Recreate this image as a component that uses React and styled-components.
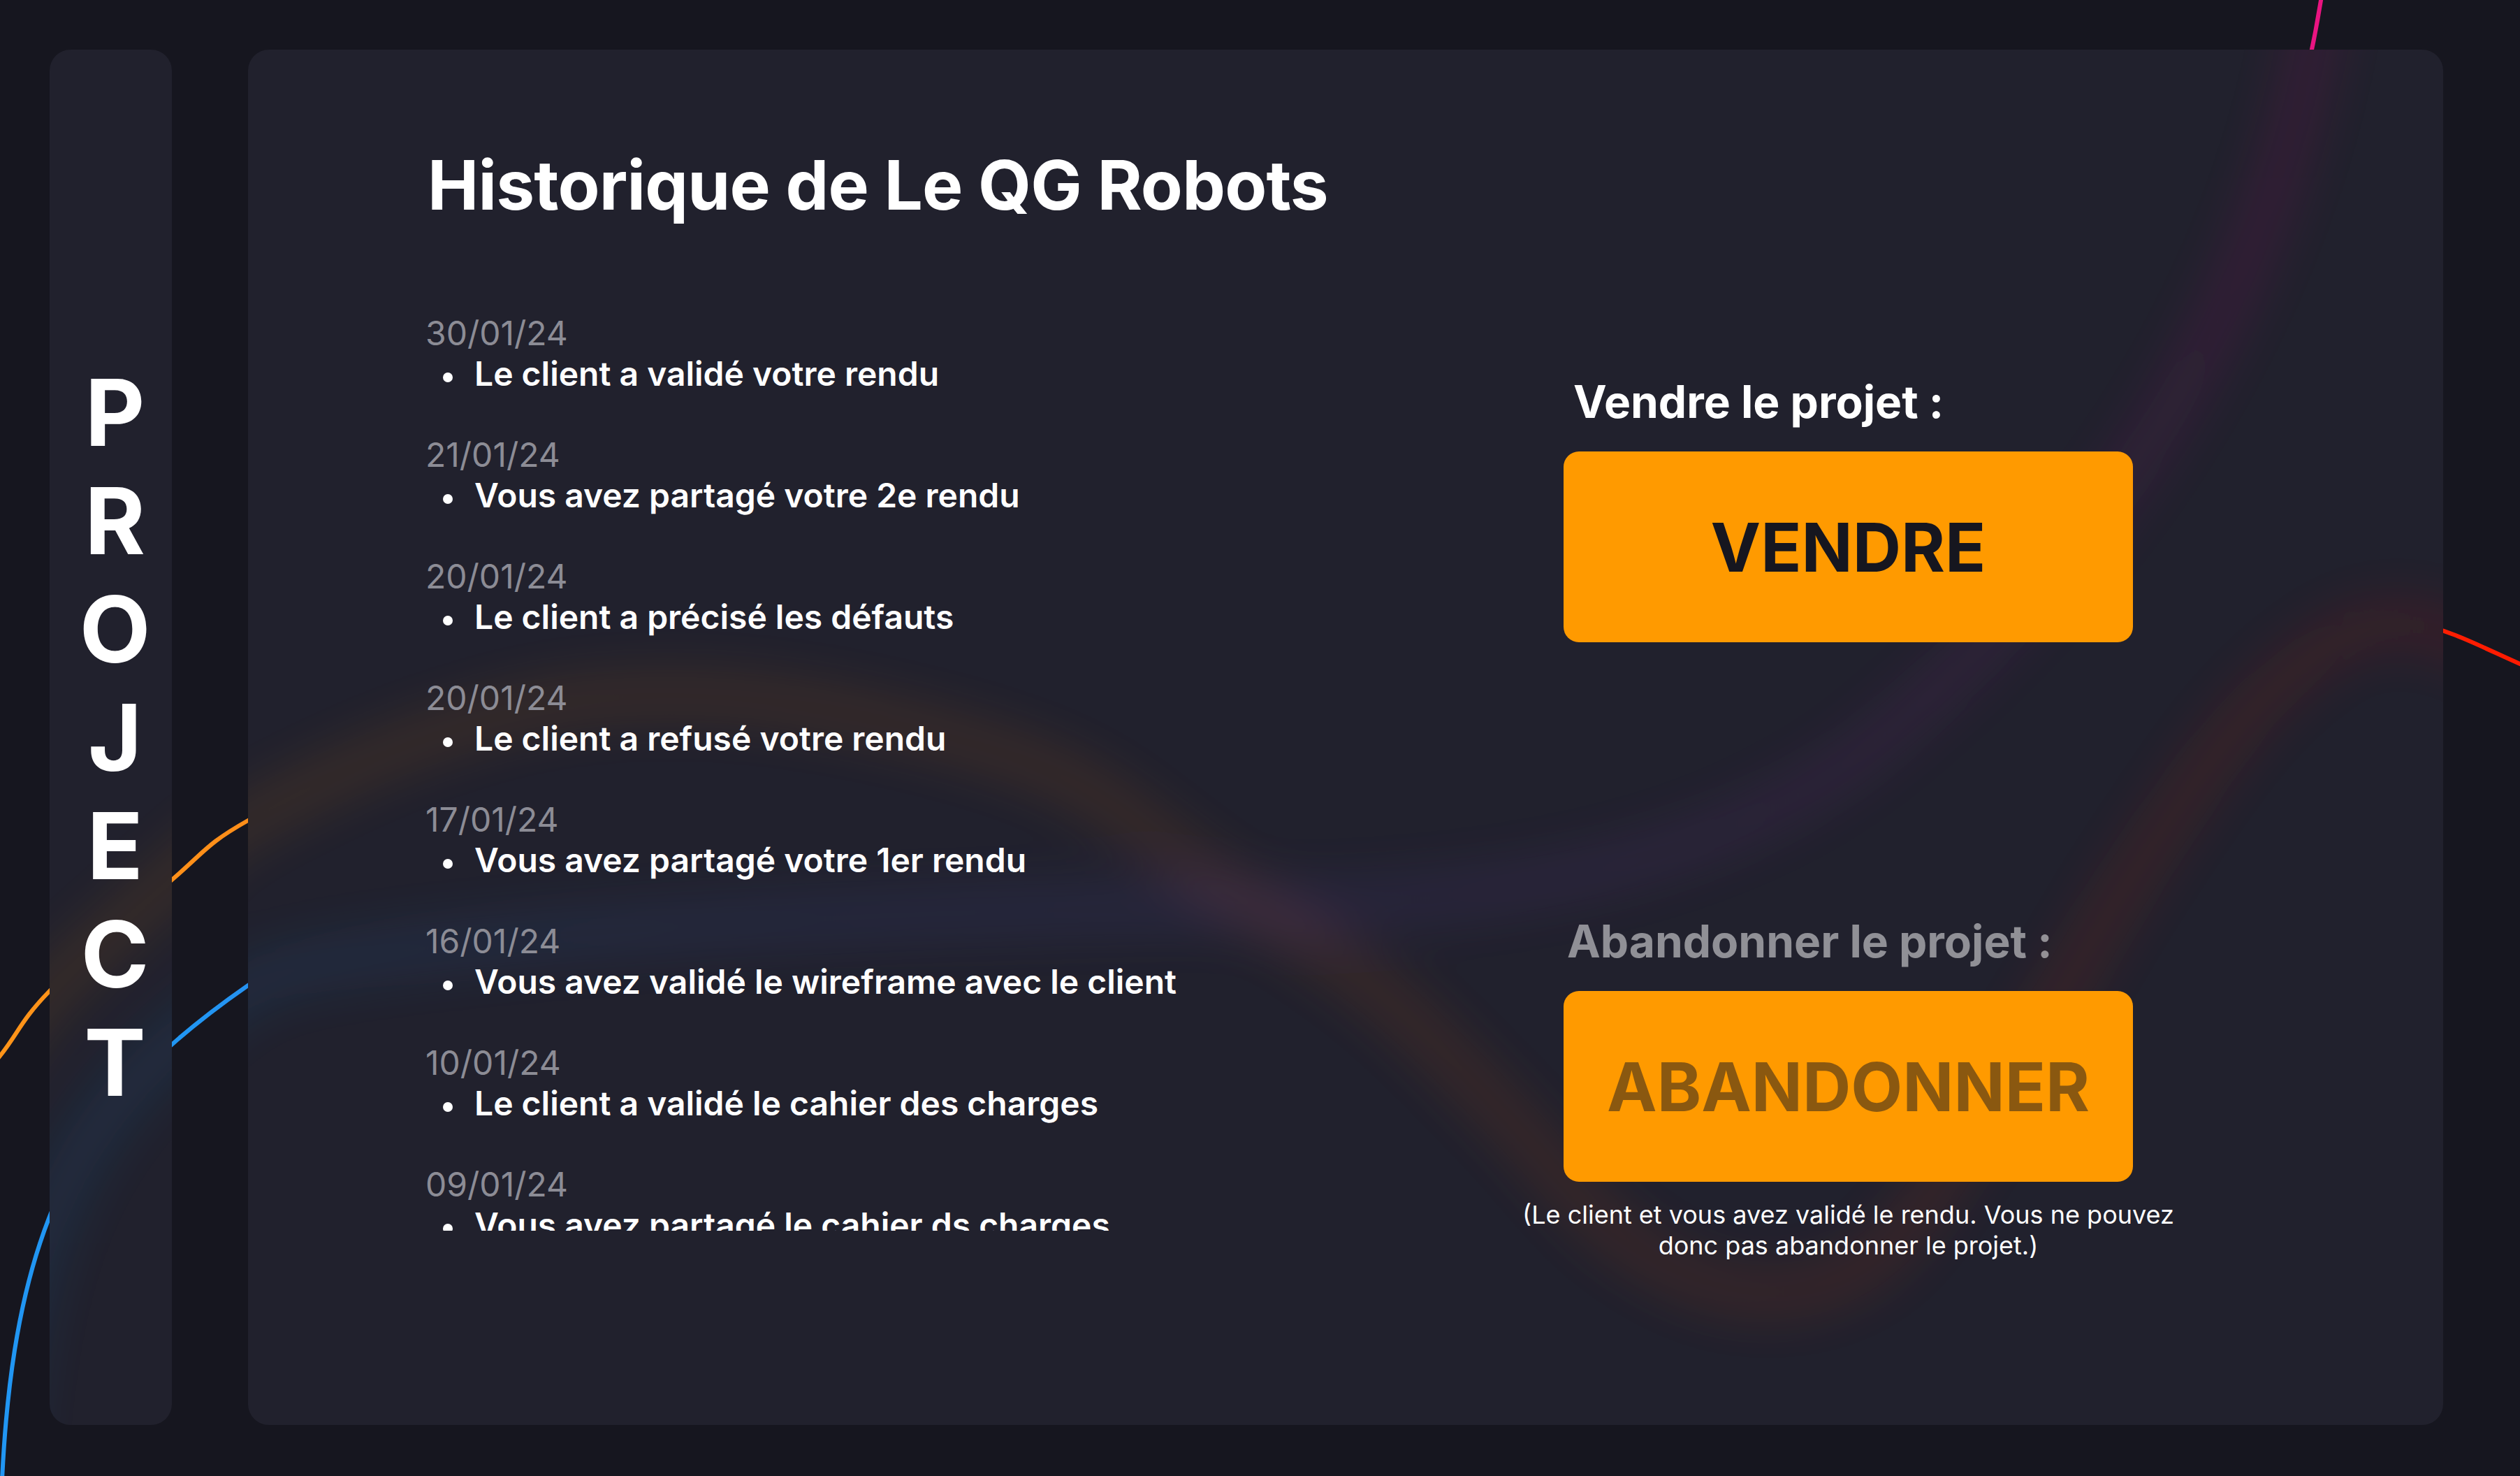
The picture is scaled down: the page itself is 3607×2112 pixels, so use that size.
import React from "react";
import styled, { createGlobalStyle } from "styled-components";

const GlobalStyle = createGlobalStyle`
  html, body {
    margin: 0;
    padding: 0;
    background: #16161f;
  }
  body {
    font-family: Inter, "Noto Sans", "Liberation Sans", sans-serif;
    color: #fff;
  }
  * {
    box-sizing: border-box;
  }
`;

// ligne lissée (catmull-rom -> bezier)
const smoothPath = (pts) => {
  let d = `M${pts[0][0]},${pts[0][1]}`;
  for (let i = 0; i < pts.length - 1; i++) {
    const p0 = pts[i - 1] || pts[i];
    const p1 = pts[i];
    const p2 = pts[i + 1];
    const p3 = pts[i + 2] || p2;
    const c1 = [p1[0] + (p2[0] - p0[0]) / 6, p1[1] + (p2[1] - p0[1]) / 6];
    const c2 = [p2[0] - (p3[0] - p1[0]) / 6, p2[1] - (p3[1] - p1[1]) / 6];
    d += ` C${c1[0]},${c1[1]} ${c2[0]},${c2[1]} ${p2[0]},${p2[1]}`;
  }
  return d;
};

const courbeOrange = smoothPath([
  [-90, 1620], [0, 1511], [71, 1418], [246, 1259], [355, 1174], [600, 1060],
  [850, 1000], [1150, 1010], [1503, 1102], [1733, 1256], [1962, 1410],
  [2150, 1590], [2320, 1770], [2500, 1850], [2680, 1805], [2830, 1610],
  [2950, 1420], [3060, 1240], [3210, 1030], [3350, 912], [3460, 893],
  [3607, 950], [3750, 1020],
]);

// arc bleu -> rose
const courbeBleue =
  "M0,2250 C0,1750 110,1580 355,1410 C455,1341 1300,1300 1800,1297 " +
  "C2200,1294 2500,1220 2700,1050 C2950,840 3270,480 3333,-80";

const historique = [
  { date: "30/01/24", texte: "Le client a validé votre rendu" },
  { date: "21/01/24", texte: "Vous avez partagé votre 2e rendu" },
  { date: "20/01/24", texte: "Le client a précisé les défauts" },
  { date: "20/01/24", texte: "Le client a refusé votre rendu" },
  { date: "17/01/24", texte: "Vous avez partagé votre 1er rendu" },
  { date: "16/01/24", texte: "Vous avez validé le wireframe avec le client" },
  { date: "10/01/24", texte: "Le client a validé le cahier des charges" },
  { date: "09/01/24", texte: "Vous avez partagé le cahier ds charges" },
];

// les deux courbes, nettes (fond) ou floues (halo sous le verre)
function Courbes({ id, flou }) {
  return (
    <>
      <defs>
        <linearGradient id={`${id}-o`} gradientUnits="userSpaceOnUse" x1="0" y1="0" x2="3607" y2="0">
          <stop offset="0" stopColor="#ff9419" />
          <stop offset="0.45" stopColor="#ff7a1a" />
          <stop offset="0.8" stopColor="#ff3a10" />
          <stop offset="1" stopColor="#ff1a00" />
        </linearGradient>
        <linearGradient id={`${id}-b`} gradientUnits="userSpaceOnUse" x1="300" y1="1500" x2="3330" y2="0">
          <stop offset="0" stopColor="#2196f3" />
          <stop offset="0.45" stopColor="#6a4fd0" />
          <stop offset="1" stopColor="#ec1380" />
        </linearGradient>
        {flou && (
          <filter id={`${id}-f`} filterUnits="userSpaceOnUse" x="-300" y="-300" width="4200" height="2700">
            <feGaussianBlur stdDeviation="40" />
          </filter>
        )}
      </defs>
      <g filter={flou ? `url(#${id}-f)` : undefined} opacity={flou ? 0.5 : 1}>
        <path d={courbeBleue} fill="none" stroke={`url(#${id}-b)`} strokeWidth={flou ? 14 : 6} />
        <path d={courbeOrange} fill="none" stroke={`url(#${id}-o)`} strokeWidth={flou ? 14 : 6} />
      </g>
    </>
  );
}

const Page = styled.div`
  position: relative;
  width: 100vw;
  height: 100vh;
  overflow: hidden;
  display: flex;
  gap: 109px;
  padding: 71px 110px 73px 71px;
`;

const Fond = styled.svg`
  position: absolute;
  inset: 0;
  width: 100%;
  height: 100%;
  z-index: 0;
`;

const Halo = styled.svg`
  position: absolute;
  left: -${(p) => p.$x}px;
  top: -${(p) => p.$y}px;
  width: 3607px;
  height: 2112px;
  z-index: -1;
  pointer-events: none;
`;

const Verre = styled.div`
  position: relative;
  z-index: 1;
  overflow: hidden;
  border-radius: 30px;
  background: #21212d;
`;

const Barre = styled(Verre)`
  width: 175px;
  flex-shrink: 0;
  display: flex;
  flex-direction: column;
  align-items: center;
  justify-content: center;
  padding-left: 12px;
`;

const Lettre = styled.span`
  display: block;
  font-size: 132px;
  font-weight: 700;
  line-height: 155px;
  text-align: center;
`;

const Panneau = styled(Verre)`
  flex: 1;
  padding: 135px 444px 0 254px;
  display: flex;
  flex-direction: column;
`;

const Titre = styled.h1`
  margin: 0 0 0 3px;
  font-size: 98px;
  line-height: 118px;
  font-weight: 700;
  letter-spacing: -0.8px;
`;

const Contenu = styled.div`
  margin-top: 124px;
  display: grid;
  grid-template-columns: 1fr 815px;
  gap: 100px;
`;

const Liste = styled.div`
  height: 1313px;
  overflow: hidden;
  display: flex;
  flex-direction: column;
  gap: 58px;
`;

const Entree = styled.div`
  display: flex;
  flex-direction: column;
`;

const Date = styled.div`
  font-size: 48px;
  line-height: 58px;
  color: #8c8c95;
`;

const Ligne = styled.div`
  display: flex;
  align-items: flex-start;
  font-size: 48px;
  line-height: 58px;
  font-weight: 600;
  white-space: nowrap;
`;

const Puce = styled.span`
  width: 14px;
  height: 14px;
  border-radius: 50%;
  background: #fff;
  margin: 27px 31px 0 25px;
  flex-shrink: 0;
`;

const Colonne = styled.div`
  display: flex;
  flex-direction: column;
  align-items: stretch;
  padding-top: 88px;
`;

const Etiquette = styled.div`
  font-size: 64px;
  line-height: 77px;
  font-weight: 700;
  padding-left: ${(p) => (p.$inactif ? 5 : 14)}px;
  color: ${(p) => (p.$inactif ? "rgba(255,255,255,0.5)" : "#fff")};
  margin-top: ${(p) => p.$haut || 0}px;
`;

const Bouton = styled.button`
  margin-top: 33px;
  height: 273px;
  border: none;
  border-radius: 22px;
  background: #ff9a00;
  font-family: inherit;
  font-size: 96px;
  font-weight: 700;
  color: ${(p) => (p.$inactif ? "rgba(22,22,31,0.5)" : "#16161f")};
  cursor: ${(p) => (p.$inactif ? "not-allowed" : "pointer")};
`;

const Note = styled.p`
  margin: 25px -80px 0;
  font-size: 36px;
  line-height: 44px;
  text-align: center;
`;

export default function App() {
  return (
    <>
      <GlobalStyle />
      <Page>
        <Fond viewBox="0 0 3607 2112">
          <Courbes id="fond" />
        </Fond>

        <Barre>
          <Halo $x={71} $y={71} viewBox="0 0 3607 2112">
            <Courbes id="barre" flou />
          </Halo>
          {"PROJECT".split("").map((l, i) => (
            <Lettre key={i}>{l}</Lettre>
          ))}
        </Barre>

        <Panneau>
          <Halo $x={355} $y={71} viewBox="0 0 3607 2112">
            <Courbes id="panneau" flou />
          </Halo>
          <Titre>Historique de Le QG Robots</Titre>
          <Contenu>
            <Liste>
              {historique.map((h, i) => (
                <Entree key={i}>
                  <Date>{h.date}</Date>
                  <Ligne>
                    <Puce />
                    {h.texte}
                  </Ligne>
                </Entree>
              ))}
            </Liste>

            <Colonne>
              <Etiquette>Vendre le projet :</Etiquette>
              <Bouton>VENDRE</Bouton>
              <Etiquette $inactif $haut={389}>
                Abandonner le projet :
              </Etiquette>
              <Bouton $inactif disabled>
                ABANDONNER
              </Bouton>
              <Note>
                (Le client et vous avez validé le rendu. Vous ne pouvez donc pas
                abandonner le projet.)
              </Note>
            </Colonne>
          </Contenu>
        </Panneau>
      </Page>
    </>
  );
}
